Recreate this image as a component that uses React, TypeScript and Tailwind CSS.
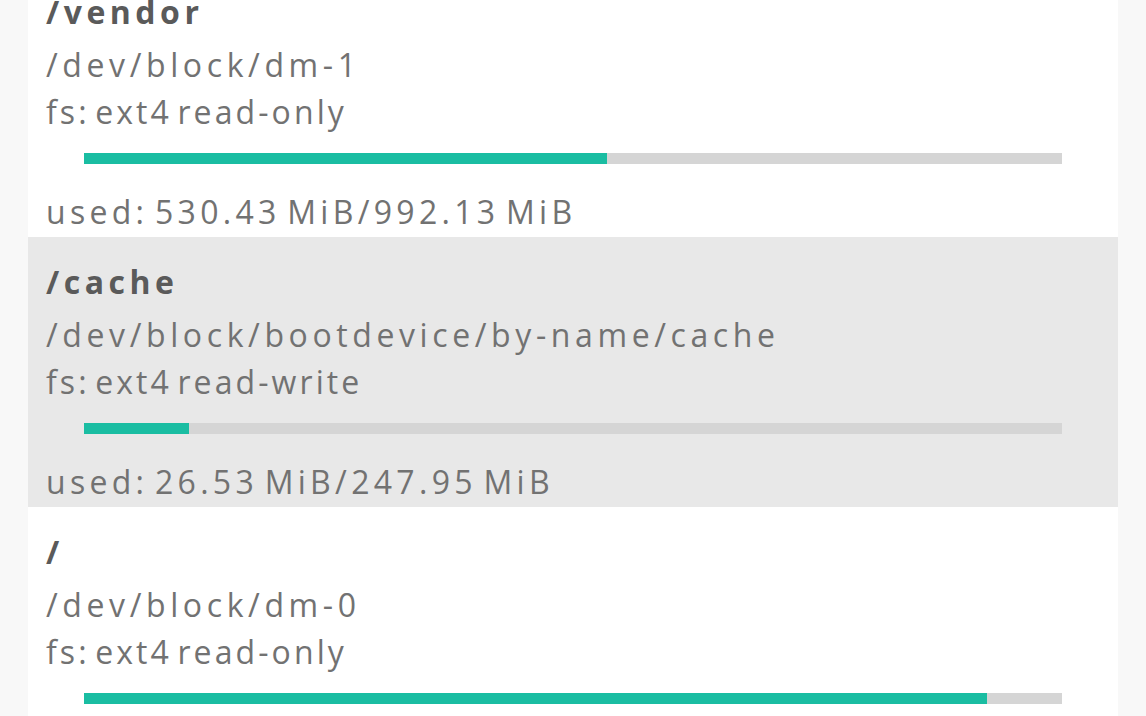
import React from "react";

interface Mount {
  path: string;
  device: string;
  fs: string;
  mode: string;
  used: number;
  total: number;
  usedLabel: string;
  totalLabel: string;
}

const MOUNTS: Mount[] = [
  { path: "/vendor", device: "/dev/block/dm-1", fs: "ext4", mode: "read-only", used: 530.43, total: 992.13, usedLabel: "530.43 MiB", totalLabel: "992.13 MiB" },
  { path: "/cache", device: "/dev/block/bootdevice/by-name/cache", fs: "ext4", mode: "read-write", used: 26.53, total: 247.95, usedLabel: "26.53 MiB", totalLabel: "247.95 MiB" },
  { path: "/", device: "/dev/block/dm-0", fs: "ext4", mode: "read-only", used: 3046.2, total: 3300, usedLabel: "3.04 GiB", totalLabel: "3.22 GiB" },
];

function MountRow({ mount, selected }: { mount: Mount; selected: boolean }) {
  const pct = (mount.used / mount.total) * 100;
  return (
    <div className={`h-[270px] pt-[22px] pl-[18px] ${selected ? "bg-[#e8e8e8]" : "bg-white"}`}>
      <div className="leading-[46px] font-bold tracking-[4.5px] text-[#5a5a5a]">{mount.path}</div>
      <div className="mt-[7px] leading-[46px] tracking-[4.6px]">{mount.device}</div>
      <div className="mt-[1px] leading-[46px] tracking-[3.1px]">
        fs: {mount.fs} {mount.mode}
      </div>
      {/* usage bar */}
      <div className="mt-[18px] ml-[38px] mr-[56px] h-[11px] bg-[#d5d5d5]">
        <div className="h-full bg-[#1abda2]" style={{ width: `${pct}%` }} />
      </div>
      <div className="mt-[25px] leading-[46px] tracking-[4.3px]">
        used: {mount.usedLabel}/{mount.totalLabel}
      </div>
    </div>
  );
}

export default function App() {
  return (
    <div className="h-[716px] overflow-hidden bg-[#f8f8f8] px-[28px] font-['Open_Sans','Noto_Sans',sans-serif] text-[32px] [word-spacing:-6px] text-[#727272]">
      <div className="mt-[-33px]">
        {MOUNTS.map((m) => (
          <MountRow key={m.path} mount={m} selected={m.path === "/cache"} />
        ))}
      </div>
    </div>
  );
}
